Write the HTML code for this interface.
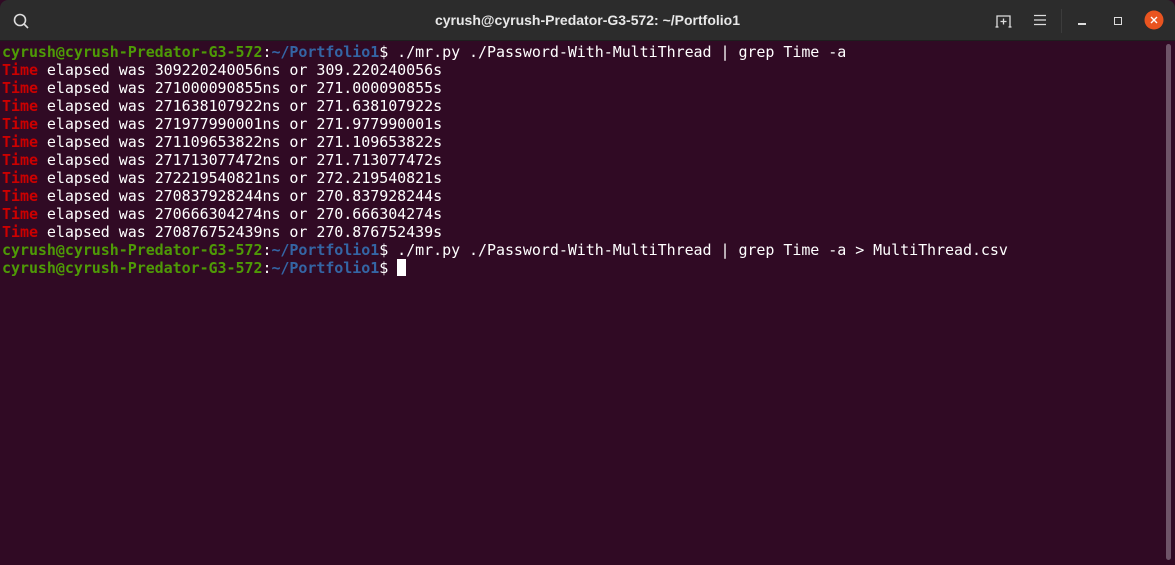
<!DOCTYPE html><html><head><style>
body{margin:0;width:1175px;height:565px;overflow:hidden;background:#300a24;font-family:"DejaVu Sans Mono",monospace}
.tb{position:absolute;left:0;top:0;width:1175px;height:41px;background:#2c2c2c;border-radius:8px 8px 0 0;border-bottom:1px solid #1e1e1e;box-sizing:border-box}
.title{position:absolute;left:0;right:0;top:12px;text-align:center;color:#e8e8e8;font:bold 14px "Liberation Sans",sans-serif}
.term{position:absolute;left:2px;top:43px;font-size:15px;line-height:18px;letter-spacing:-0.05px;color:#fff;white-space:pre}
.g{color:#4e9a06;font-weight:bold}.b{color:#3465a4;font-weight:bold}.r{color:#cc0000;font-weight:bold}
.cur{display:inline-block;width:9px;height:17px;background:#fff;vertical-align:-3px}
.sb{position:absolute;left:1166px;top:44px;width:5px;height:516px;background:#6e5468;border-radius:3px}
</style></head><body>
<div class="tb">
<svg style="position:absolute;left:12px;top:12px" width="18" height="18"><circle cx="8" cy="8" r="5.5" stroke="#ddd" stroke-width="1.6" fill="none"/><line x1="12" y1="12" x2="16" y2="16" stroke="#ddd" stroke-width="1.6"/></svg>
<div class="title">cyrush@cyrush-Predator-G3-572: ~/Portfolio1</div>
<svg style="position:absolute;left:995px;top:14px" width="18" height="14"><path d="M2 13V2H15V13M0.5 13H3.5M13.5 13H16.5M8.5 4.5V10.5M5.5 7.5H11.5" stroke="#ddd" stroke-width="1.3" fill="none"/></svg>
<svg style="position:absolute;left:1034px;top:14px" width="12" height="12"><path d="M0 1.5H12M0 6H12M0 10.5H12" stroke="#ddd" stroke-width="1.2"/></svg>
<div style="position:absolute;left:1061px;top:9px;width:1px;height:24px;background:#3c3c3c"></div>
<div style="position:absolute;left:1078px;top:23px;width:8px;height:1.5px;background:#ddd"></div>
<div style="position:absolute;left:1114px;top:17px;width:6px;height:6px;border:1.5px solid #ddd"></div>
<svg style="position:absolute;left:1144px;top:10px" width="20" height="20"><circle cx="10" cy="10" r="9.5" fill="#e95420"/><path d="M7 7L13 13M13 7L7 13" stroke="#fff" stroke-width="1.4"/></svg>
</div>
<div class="term"><span class="g">cyrush@cyrush-Predator-G3-572</span>:<span class="b">~/Portfolio1</span>$ ./mr.py ./Password-With-MultiThread | grep Time -a
<span class="r">Time</span> elapsed was 309220240056ns or 309.220240056s
<span class="r">Time</span> elapsed was 271000090855ns or 271.000090855s
<span class="r">Time</span> elapsed was 271638107922ns or 271.638107922s
<span class="r">Time</span> elapsed was 271977990001ns or 271.977990001s
<span class="r">Time</span> elapsed was 271109653822ns or 271.109653822s
<span class="r">Time</span> elapsed was 271713077472ns or 271.713077472s
<span class="r">Time</span> elapsed was 272219540821ns or 272.219540821s
<span class="r">Time</span> elapsed was 270837928244ns or 270.837928244s
<span class="r">Time</span> elapsed was 270666304274ns or 270.666304274s
<span class="r">Time</span> elapsed was 270876752439ns or 270.876752439s
<span class="g">cyrush@cyrush-Predator-G3-572</span>:<span class="b">~/Portfolio1</span>$ ./mr.py ./Password-With-MultiThread | grep Time -a &gt; MultiThread.csv
<span class="g">cyrush@cyrush-Predator-G3-572</span>:<span class="b">~/Portfolio1</span>$ <span class="cur"></span></div>
<div class="sb"></div>
</body></html>
